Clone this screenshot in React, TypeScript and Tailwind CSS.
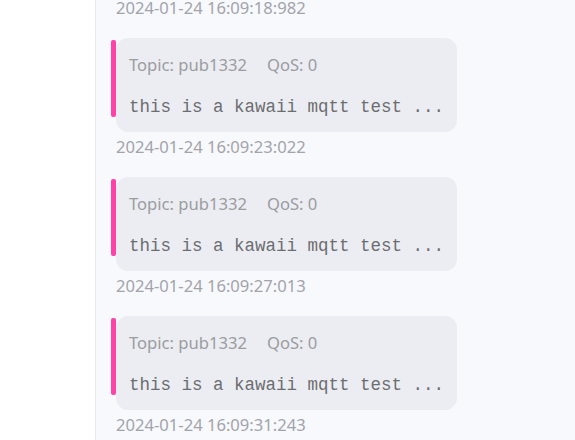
const messages = [
  { time: '2024-01-24 16:09:18:982' },
  { time: '2024-01-24 16:09:23:022' },
  { time: '2024-01-24 16:09:27:013' },
  { time: '2024-01-24 16:09:31:243' },
];

function MessageCard() {
  return (
    <div className="relative h-[94px] w-fit rounded-[12px] bg-[#ecedf2] pl-[13px] pr-[13px] pt-[16px]">
      <span className="absolute left-[-5px] top-[2px] h-[77px] w-[5px] rounded-[2px] bg-[#ff42a8]" />
      <div className="flex gap-[20px] text-[16.6px] leading-[22px] text-[#9b9ca0]">
        <span>Topic: pub1332</span>
        <span>QoS: 0</span>
      </div>
      <div className="mt-[20px] whitespace-nowrap font-['Liberation_Mono',monospace] text-[17.5px] leading-[22px] text-[#6c6d71]">
        this is a kawaii mqtt test ...
      </div>
    </div>
  );
}

export default function App() {
  return (
    <div className="flex h-[440px] w-[575px] overflow-hidden font-['Noto_Sans',sans-serif]">
      <div className="w-[96px] shrink-0 border-r border-[#e6e8ef] bg-white" />
      <div className="flex-1 bg-[#f8f9fd] pl-[20px]">
        <div className="-mt-[7px] flex flex-col">
          {messages.map((m, i) => (
            <div key={m.time} className="flex flex-col">
              {i > 0 && (
                <div className="mt-[16px]">
                  <MessageCard />
                </div>
              )}
              <div className="pt-[1px] text-[16.6px] leading-[28px] text-[#a2a4aa]">{m.time}</div>
            </div>
          ))}
        </div>
      </div>
    </div>
  );
}
